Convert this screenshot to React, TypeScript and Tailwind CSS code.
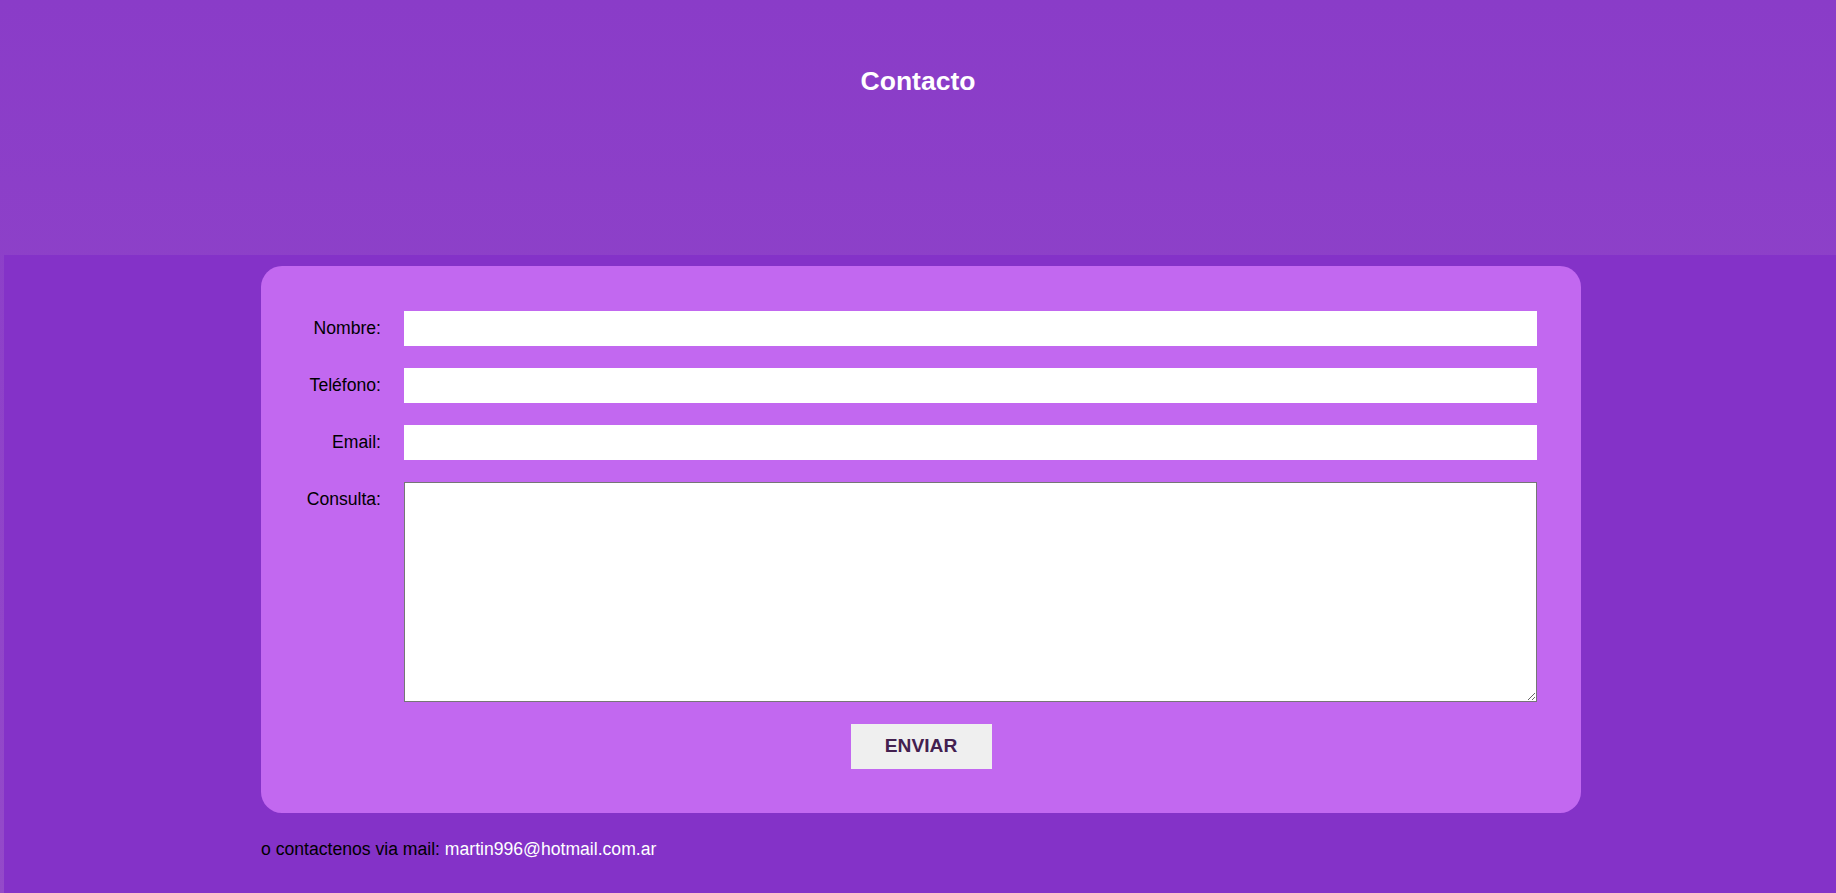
import React from 'react';

const fields = ['Nombre:', 'Teléfono:', 'Email:'];

export default function App() {
  return (
    <div className="min-h-screen bg-gradient-to-b from-[#8a3cc8] to-[#944ac9] font-['Liberation_Sans',Arial,sans-serif]">
      <header className="h-[255px] pt-[62px] text-center">
        <h1 className="text-[26.5px] font-bold text-white">Contacto</h1>
      </header>

      <main className="ml-[4px] pl-[2px] min-h-[638px] bg-[#8432c8] pt-[11px] pb-10">
        <form className="mx-auto w-[1320px] rounded-[21px] bg-[#c268f0] px-[44px] pt-[45px] pb-[44px] flex flex-col gap-[22px]">
          {fields.map((label) => (
            <div key={label} className="flex items-start gap-[23px]">
              <label className="w-[76px] h-[35px] flex items-center justify-end text-[17.6px] text-black">
                {label}
              </label>
              <input type="text" className="flex-1 h-[35px] bg-white border-0 outline-none px-2" />
            </div>
          ))}
          <div className="flex items-start gap-[23px]">
            <label className="w-[76px] h-[35px] flex items-center justify-end text-[17.6px] text-black">
              Consulta:
            </label>
            <textarea className="flex-1 h-[220px] bg-white border border-[#767676] outline-none" />
          </div>
          <div className="flex justify-center">
            <button
              type="button"
              className="w-[141px] h-[45px] bg-[#efefef] text-[19.2px] font-bold text-[#43204f]"
            >
              ENVIAR
            </button>
          </div>
        </form>

        <p className="mx-auto w-[1320px] mt-[23px] text-[17.6px] text-black">
          o contactenos via mail: <span className="text-white">martin996@hotmail.com.ar</span>
        </p>
      </main>
    </div>
  );
}
